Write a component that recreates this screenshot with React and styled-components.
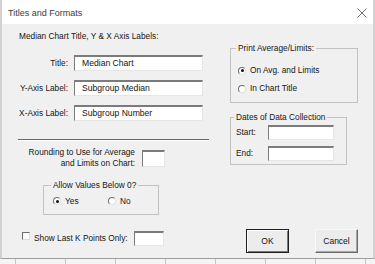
import React from 'react';
import styled, { createGlobalStyle } from 'styled-components';

const GlobalStyle = createGlobalStyle`
  html, body { margin: 0; padding: 0; background: #f0f0f0; }
  body {
    width: 375px;
    height: 264px;
    overflow: hidden;
    font-family: "Liberation Sans", Arial, sans-serif;
    color: #161616;
  }
`;

export default function App() {
  return (
    <>
      <GlobalStyle />
      <Screen>
        <Window>
          <TitleBar>
            <Caption>Titles and Formats</Caption>
            <Close width="10" height="10" viewBox="0 0 10 10">
              <path d="M0.5 0.5 L9.5 9.5 M9.5 0.5 L0.5 9.5" stroke="#6d6d6d" strokeWidth="1" fill="none" />
            </Close>
          </TitleBar>
          <Body>
            <Main>
              <LeftCol>
                <Heading>Median Chart Title, Y &amp; X Axis Labels:</Heading>
                <Fields>
                  <FieldRow>
                    <FieldLabel>Title:</FieldLabel>
                    <TextBox $w={129} $h={16}>Median Chart</TextBox>
                  </FieldRow>
                  <FieldRow>
                    <FieldLabel>Y-Axis Label:</FieldLabel>
                    <TextBox $w={129} $h={16}>Subgroup Median</TextBox>
                  </FieldRow>
                  <FieldRow>
                    <FieldLabel>X-Axis Label:</FieldLabel>
                    <TextBox $w={129} $h={16}>Subgroup Number</TextBox>
                  </FieldRow>
                </Fields>
                <Divider />
                <RoundRow>
                  <RoundText>Rounding to Use for Average<br />and Limits on Chart:</RoundText>
                  <TextBox $w={23} $h={17} />
                </RoundRow>
                <AllowGroup>
                  <Legend>Allow Values Below 0?</Legend>
                  <OptionPair>
                    <Option><Radio $on /> Yes</Option>
                    <Option><Radio /> No</Option>
                  </OptionPair>
                </AllowGroup>
              </LeftCol>
              <RightCol>
                <PrintGroup>
                  <Legend>Print Average/Limits:</Legend>
                  <OptionStack>
                    <Option><Radio $on /> On Avg. and Limits</Option>
                    <Option><Radio /> In Chart Title</Option>
                  </OptionStack>
                </PrintGroup>
                <DatesGroup>
                  <Legend>Dates of Data Collection</Legend>
                  <DateRow>
                    <DateLabel>Start:</DateLabel>
                    <TextBox $w={66} $h={15} />
                  </DateRow>
                  <DateRow>
                    <DateLabel>End:</DateLabel>
                    <TextBox $w={66} $h={15} />
                  </DateRow>
                </DatesGroup>
              </RightCol>
            </Main>
            <Footer>
              <Check />
              <CheckText>Show Last K Points Only:</CheckText>
              <KBox $w={30} $h={15} />
              <Buttons>
                <Button $default>OK</Button>
                <Button>Cancel</Button>
              </Buttons>
            </Footer>
          </Body>
        </Window>
        <Sheet />
      </Screen>
    </>
  );
}

const Screen = styled.div`
  width: 375px;
  height: 264px;
  display: flex;
  flex-direction: column;
`;

const Window = styled.div`
  height: 259px;
  box-sizing: border-box;
  border-left: 2px solid #d2d2d2;
  border-right: 2px solid #d2d2d2;
  border-bottom: 1px solid #9d9d9d;
  background: #f0f0f0;
  display: flex;
  flex-direction: column;
`;

const TitleBar = styled.div`
  height: 24px;
  flex: none;
  background: #fff;
  display: flex;
  align-items: center;
  justify-content: space-between;
  padding: 0 6px 0 6px;
`;

const Caption = styled.span`
  font-size: 9px;
  color: #3c3c3c;
  margin-top: 1px;
`;

const Close = styled.svg`
  display: block;
  margin-top: 1px;
`;

const Body = styled.div`
  flex: 1;
  display: flex;
  flex-direction: column;
  padding: 6px 15px 0 16px;
  font-size: 8.3px;
  line-height: 11px;
`;

const Main = styled.div`
  display: flex;
  align-items: flex-start;
`;

const LeftCol = styled.div`
  width: 191px;
  display: flex;
  flex-direction: column;
`;

const Heading = styled.div`
  line-height: 12px;
  padding-left: 1px;
`;

const Fields = styled.div`
  margin-top: 13px;
  display: flex;
  flex-direction: column;
  gap: 9px;
`;

const FieldRow = styled.div`
  display: flex;
  align-items: center;
  gap: 6px;
`;

const FieldLabel = styled.span`
  width: 50px;
  text-align: right;
`;

const TextBox = styled.div`
  box-sizing: border-box;
  width: ${p => p.$w}px;
  height: ${p => p.$h}px;
  background: #fff;
  border-top: 2px solid #7b7b7b;
  border-left: 1px solid #7b7b7b;
  border-right: 1px solid #e6e6e6;
  border-bottom: 1px solid #e6e6e6;
  padding-left: 7px;
  font-size: 8.6px;
  line-height: 12px;
  color: #141414;
  white-space: nowrap;
`;

const Divider = styled.div`
  margin-top: 18px;
  height: 0;
  border-top: 1px solid #6a6a6a;
  border-bottom: 1px solid #fff;
`;

const RoundRow = styled.div`
  margin-top: 6px;
  height: 22px;
  display: flex;
  align-items: center;
  gap: 7px;
`;

const RoundText = styled.div`
  width: 117px;
  text-align: right;
`;

const Group = styled.fieldset`
  margin: 0;
  box-sizing: border-box;
  border: 1px solid #c2c2c2;
  min-width: 0;
`;

const Legend = styled.legend`
  padding: 0 2px;
  margin-left: -2px;
  line-height: 11px;
`;

const AllowGroup = styled(Group)`
  margin: 11px 0 0 25px;
  width: 116px;
  padding: 4px 0 7px 9px;
`;

const OptionPair = styled.div`
  display: grid;
  grid-template-columns: 55px auto;
  line-height: 12px;
`;

const Option = styled.label`
  display: flex;
  align-items: center;
  gap: 4px;
  white-space: nowrap;
`;

const Radio = styled.span`
  box-sizing: border-box;
  width: 8px;
  height: 8px;
  flex: none;
  border-radius: 50%;
  background: #fff;
  border: 1px solid;
  border-color: #6f6f6f #e2e2e2 #e2e2e2 #6f6f6f;
  display: flex;
  align-items: center;
  justify-content: center;
  &::after {
    content: '';
    width: 3px;
    height: 3px;
    border-radius: 50%;
    background: ${p => (p.$on ? '#111' : 'transparent')};
  }
`;

const RightCol = styled.div`
  margin: 13px 0 0 21px;
  display: flex;
  flex-direction: column;
  gap: 9px;
`;

const PrintGroup = styled(Group)`
  width: 128px;
  padding: 11px 0 8px 7px;
`;

const OptionStack = styled.div`
  display: flex;
  flex-direction: column;
  gap: 7px;
`;

const DatesGroup = styled(Group)`
  width: 117px;
  padding: 2px 0 3px 5px;
  display: flex;
  flex-direction: column;
  gap: 6px;
`;

const DateRow = styled.div`
  display: flex;
  align-items: center;
`;

const DateLabel = styled.span`
  width: 32px;
`;

const Footer = styled.div`
  margin-top: 14px;
  height: 24px;
  display: flex;
  align-items: flex-start;
`;

const Check = styled.span`
  box-sizing: border-box;
  margin: 3px 0 0 4px;
  width: 8px;
  height: 8px;
  background: #fff;
  border: 1px solid;
  border-color: #6f6f6f #dcdcdc #dcdcdc #6f6f6f;
`;

const CheckText = styled.span`
  margin: 4px 0 0 4px;
`;

const KBox = styled(TextBox)`
  margin: 2px 0 0 6px;
`;

const Buttons = styled.div`
  margin-left: auto;
  display: flex;
  gap: 26px;
`;

const Button = styled.button`
  box-sizing: border-box;
  width: 43px;
  height: 24px;
  padding: 0;
  font-family: inherit;
  font-size: 8.5px;
  color: #141414;
  background: #ececec;
  border: 1px solid;
  border-color: ${p => (p.$default ? '#1e1e1e' : '#f8f8f8 #6b6b6b #6b6b6b #f8f8f8')};
  box-shadow: ${p =>
    p.$default
      ? 'inset 1px 1px #fff, inset -1px -1px #7a7a7a'
      : 'inset -1px -1px #a6a6a6'};
`;

const Sheet = styled.div`
  flex: 1;
  background-color: #f4f4f4;
  background-image: linear-gradient(to right, #c4c4c4 1px, transparent 1px);
  background-size: 50px 100%;
  background-position: 15px 0;
`;
